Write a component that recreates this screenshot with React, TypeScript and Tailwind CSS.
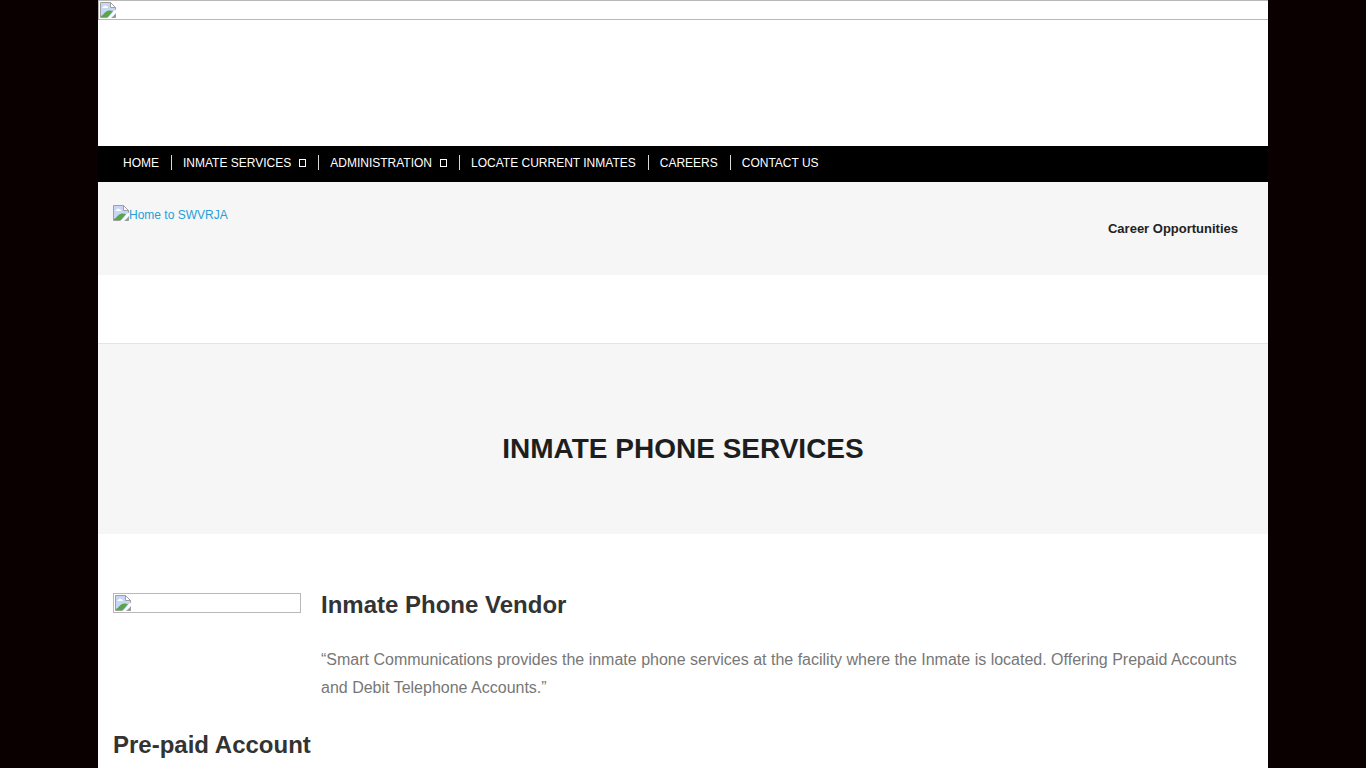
const NAV_ITEMS = [
  { label: 'Home', href: '#home', hasMenu: false },
  { label: 'Inmate Services', href: '#inmate-services', hasMenu: true },
  { label: 'Administration', href: '#administration', hasMenu: true },
  { label: 'Locate Current Inmates', href: '#locate', hasMenu: false },
  { label: 'Careers', href: '#careers', hasMenu: false },
  { label: 'Contact Us', href: '#contact', hasMenu: false },
]

function ImageIcon() {
  return (
    <svg width="16" height="16" viewBox="0 0 16 16" className="shrink-0" aria-hidden="true">
      <path d="M0.5 0.5H10.5L15.5 5.5V15.5H0.5Z" fill="#c6d6f4" />
      <path d="M2.5 6Q2 4.5 3.8 4.5Q5 2.5 6.5 4.3Q8.2 4.3 8 6Z" fill="#fff" />
      <path d="M1 15V14Q3 13 5 10.5Q7.5 8 10 8.5L13 9L8 15Z" fill="#57a64a" />
      <path d="M0.5 15.5V0.5H10.5L15.5 5.5V15.5H0.5" fill="none" stroke="#a0a0a0" />
      <path d="M10.5 0.5V5.5H15.5Z" fill="#fff" stroke="#a0a0a0" />
      <path d="M16 7.5V11L11 16H7Q10 14.5 12 11.5Q13.5 8.5 16 7.5Z" fill="#fff" />
      <path d="M12 15.5L15.5 12V15.5Z" fill="#8b9f88" />
    </svg>
  )
}

export default function App() {
  return (
    <div className="min-h-screen bg-[#0a0000] font-['Liberation_Sans',Arial,sans-serif]">
      <div className="mx-auto min-h-screen max-w-[1170px] overflow-hidden bg-white">
        {/* Banner */}
        <div className="h-[146px]">
          <div className="-mr-1 flex h-5 border border-[#b8b8b8] p-px">
            <ImageIcon />
          </div>
        </div>

        <nav className="h-9 bg-black px-[25px]">
          <ul className="flex h-[33px] items-center text-xs text-white uppercase">
            {NAV_ITEMS.map((item, i) => (
              <li key={item.label} className="flex items-center">
                {i > 0 && <span className="mr-[11px] ml-3 h-[15px] w-px bg-[#d8d8d8]" />}
                <a href={item.href} className="flex items-center whitespace-nowrap">
                  {item.label}
                  {item.hasMenu && <span className="ml-2 h-2 w-[7px] border border-white" />}
                </a>
              </li>
            ))}
          </ul>
        </nav>

        <header className="flex h-[93px] items-center justify-between bg-[#f6f6f6] pr-[30px] pl-[15px]">
          <a href="#home" className="mb-[30px] flex items-start text-xs text-[#269fd8]">
            <ImageIcon />
            <span className="pt-0.5">Home to SWVRJA</span>
          </a>
          <a href="#careers" className="text-[13px] font-bold text-[#222]">
            Career Opportunities
          </a>
        </header>

        {/* Page title */}
        <div className="mt-[68px] flex h-[191px] items-center justify-center border-t border-[#e5e5e5] bg-[#f6f6f6] pt-5">
          <h1 className="text-[28px] font-bold text-[#1e1e1e] uppercase">Inmate Phone Services</h1>
        </div>

        <main className="px-[15px] pt-[57px]">
          <section className="flex gap-5">
            <div className="mt-0.5 flex h-5 w-[188px] shrink-0 border border-[#b8b8b8] p-px">
              <ImageIcon />
            </div>
            <div>
              <h2 className="text-2xl leading-7 font-bold text-[#333]">Inmate Phone Vendor</h2>
              <p className="mt-[27px] text-base leading-7 text-[#777]">
                “Smart Communications provides the inmate phone services at the facility where the Inmate
                is located. Offering Prepaid Accounts and Debit Telephone Accounts.”
              </p>
            </div>
          </section>
          <h2 className="mt-[29px] text-2xl leading-7 font-bold text-[#333]">Pre-paid Account</h2>
        </main>
      </div>
    </div>
  )
}
